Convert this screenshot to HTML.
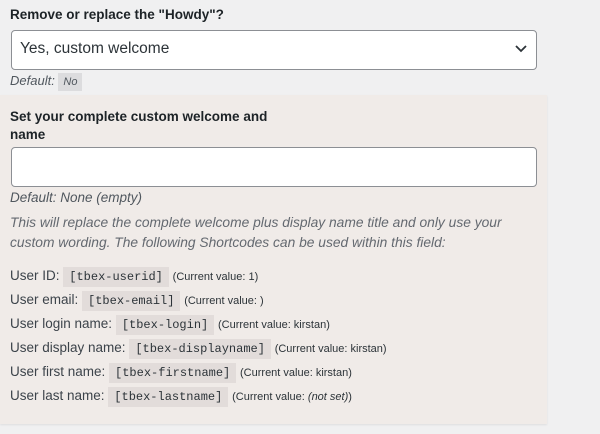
<!DOCTYPE html><html><head><style>
body{margin:0;width:600px;height:434px;background:#f0f0f1;font-family:"Liberation Sans",sans-serif;color:#1d2327;position:relative;overflow:hidden}
.a{position:absolute;white-space:nowrap}
.box{position:absolute;left:0;top:95px;width:547px;height:329px;background:#f0ebe8;box-shadow:0 1px 2px rgba(0,0,0,.08)}
code{font-family:"Liberation Mono",monospace;font-size:12px;background:#e2dcda;padding:3px 6px;color:#2c3338}
.sm{font-size:11px;color:#2c3338}
.u{font-size:13.5px;color:#3c434a}
</style></head><body>
<div class="a" style="left:10px;top:7px;font-size:13.5px;font-weight:bold">Remove or replace the "Howdy"?</div>
<div class="a" style="left:11px;top:30px;width:524px;height:38px;border:1px solid #8c8f94;border-radius:4px;background:#fff"></div>
<div class="a" style="left:20px;top:40px;font-size:15.5px;color:#2c3338">Yes, custom welcome</div>
<svg class="a" style="left:514px;top:44px" width="14" height="10"><path d="M2 2 L7 7 L12 2" fill="none" stroke="#2c3338" stroke-width="1.8"/></svg>
<div class="a" style="left:10px;top:73px;font-size:13px;font-style:italic;color:#50575e">Default: <span style="background:#dcdcde;padding:3px 5px;font-size:11px">No</span></div>
<div class="box"></div>
<div class="a" style="left:10px;top:108px;font-size:13.5px;font-weight:bold;line-height:18px">Set your complete custom welcome and<br>name</div>
<div class="a" style="left:11px;top:147px;width:524px;height:38px;border:1px solid #8c8f94;border-radius:4px;background:#fff"></div>
<div class="a" style="left:10px;top:190px;font-size:13.5px;font-style:italic;color:#50575e">Default: None (empty)</div>
<div class="a" style="left:10px;top:213px;font-size:13.8px;font-style:italic;color:#646970;line-height:20px">This will replace the complete welcome plus display name title and only use your<br>custom wording. The following Shortcodes can be used within this field:</div>
<div class="a u" style="left:10px;top:268px">User ID: <code>[tbex-userid]</code> <span class="sm">(Current value: 1)</span></div>
<div class="a u" style="left:10px;top:292px">User email: <code>[tbex-email]</code> <span class="sm">(Current value: )</span></div>
<div class="a u" style="left:10px;top:316px">User login name: <code>[tbex-login]</code> <span class="sm">(Current value: kirstan)</span></div>
<div class="a u" style="left:10px;top:340px">User display name: <code>[tbex-displayname]</code> <span class="sm">(Current value: kirstan)</span></div>
<div class="a u" style="left:10px;top:364px">User first name: <code>[tbex-firstname]</code> <span class="sm">(Current value: kirstan)</span></div>
<div class="a u" style="left:10px;top:388px">User last name: <code>[tbex-lastname]</code> <span class="sm">(Current value: <i>(not set)</i>)</span></div>
</body></html>
